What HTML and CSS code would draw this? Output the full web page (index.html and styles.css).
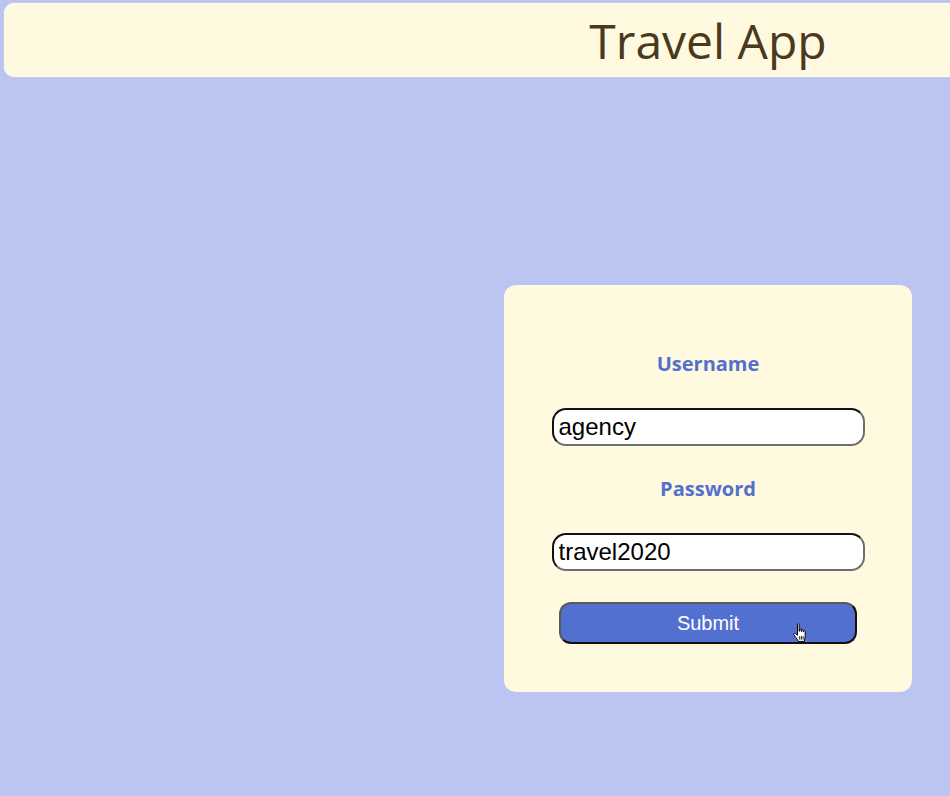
FILE: index.html
```html
<!DOCTYPE html>
<html lang="en">
<head>
<meta charset="utf-8">
<title>Travel App</title>
<link rel="stylesheet" href="styles.css">
</head>
<body>
<header class="topbar">
  <h1 class="title">Travel App</h1>
</header>
<main class="main">
  <form class="login-card" onsubmit="return false">
    <label class="field-label" for="username">Username</label>
    <input class="field-input" id="username" type="text" value="agency">
    <label class="field-label" for="password">Password</label>
    <input class="field-input" id="password" type="text" value="travel2020">
    <div class="button-wrap">
      <button class="submit-btn" type="submit">Submit</button>
      <svg class="cursor" width="16" height="20" viewBox="0 0 16 20" aria-hidden="true">
        <path d="M5.5 1.6C5.5 0.6 7.2 0.6 7.2 1.6L7.2 8.2L7.6 8.2L7.6 6.8C7.6 5.9 9.2 5.9 9.2 6.8L9.2 8.4L9.6 8.4L9.6 7.3C9.6 6.5 11.2 6.5 11.2 7.3L11.2 8.8L11.6 8.8L11.6 8.2C11.6 7.4 13.2 7.4 13.2 8.2L13.2 13.2C13.2 15.2 12.3 16.4 12.3 18.4L6.3 18.4C5.8 16.6 3.2 13.6 1.9 11.9C1.2 10.9 2.3 9.8 3.4 10.6L5.5 12.2Z" fill="#fff" stroke="#000" stroke-width="1" stroke-linejoin="round"/>
        <path d="M7.7 13.2V16.6M9.4 13.2V16.6M11.1 13.2V16.6" stroke="#000" stroke-width="0.9"/>
      </svg>
    </div>
  </form>
</main>
</body>
</html>
```
FILE: styles.css
```css
html, body {
  margin: 0;
  padding: 0;
}
body {
  background: #bcc4f2;
  font-family: "Open Sans", "Liberation Sans", sans-serif;
  overflow: hidden;
  width: 950px;
  height: 796px;
}
.topbar {
  margin: 3px -20px 0 4px;
  height: 74px;
  background: #fff9e0;
  border-radius: 10px;
  padding-left: 500px;
  box-sizing: border-box;
  box-shadow: 0 0 1px rgba(255, 255, 255, 0.8);
}
.title {
  margin: 0;
  width: 408px;
  text-align: center;
  font-family: "Open Sans", sans-serif;
  font-weight: 400;
  font-size: 48px;
  line-height: 66px;
  padding-top: 5px;
  color: #4a391d;
}
.main {
  display: flex;
  padding: 208px 0 0 504px;
}
.login-card {
  width: 408px;
  height: 407px;
  box-sizing: border-box;
  background: #fff9e0;
  border-radius: 12px;
  padding: 65px 0 0;
  display: flex;
  flex-direction: column;
  align-items: center;
}
.field-label {
  font-family: "Open Sans", sans-serif;
  font-weight: 700;
  font-size: 20px;
  line-height: 27px;
  color: #5470cf;
  margin-bottom: 31px;
}
.field-input {
  width: 313px;
  height: 38px;
  box-sizing: border-box;
  margin: 0 0 29px;
  padding: 0 5px;
  background: #fff;
  border: 2px solid;
  border-color: #111 #6e6e6e #6e6e6e #111;
  border-radius: 14px;
  font-family: "Liberation Sans", Arial, sans-serif;
  font-size: 24px;
  color: #000;
  outline: none;
}
#password {
  margin-bottom: 31px;
}
.button-wrap {
  position: relative;
}
.submit-btn {
  display: block;
  width: 298px;
  height: 42px;
  box-sizing: border-box;
  background: #5270cf;
  border: 2px solid;
  border-color: #5a5a5a #111 #111 #5a5a5a;
  border-radius: 12px;
  color: #fff;
  font-family: "Liberation Sans", Arial, sans-serif;
  font-size: 20px;
  padding: 0;
}
.cursor {
  position: absolute;
  left: 233px;
  top: 21px;
}
```
